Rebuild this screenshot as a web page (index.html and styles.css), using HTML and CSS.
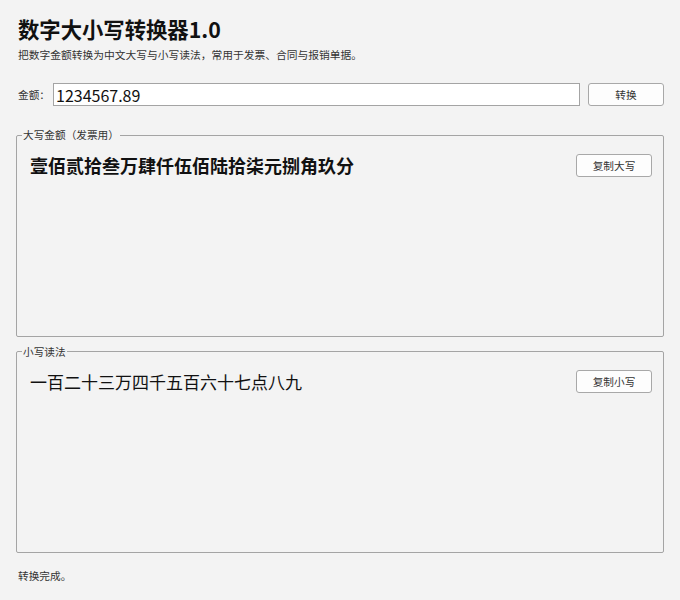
FILE: index.html
```html
<!DOCTYPE html>
<html lang="zh-CN">
<head>
<meta charset="utf-8">
<title>数字大小写转换器1.0</title>
<link rel="stylesheet" href="styles.css">
</head>
<body>
<div class="app">
  <h1 class="title">数字大小写转换器1.0</h1>
  <p class="subtitle cjk">把数字金额转换为中文大写与小写读法，常用于发票、合同与报销单据。</p>
  <div class="input-row">
    <label class="label cjk" for="amount">金额：</label>
    <input id="amount" class="amount" type="text" value="1234567.89">
    <button class="btn btn-convert">转换</button>
  </div>
  <fieldset class="group">
    <legend class="legend cjk">大写金额（发票用）</legend>
    <div class="result-row">
      <span class="result result-bold">壹佰贰拾叁万肆仟伍佰陆拾柒元捌角玖分</span>
      <button class="btn">复制大写</button>
    </div>
  </fieldset>
  <fieldset class="group">
    <legend class="legend cjk">小写读法</legend>
    <div class="result-row">
      <span class="result result-plain">一百二十三万四千五百六十七点八九</span>
      <button class="btn">复制小写</button>
    </div>
  </fieldset>
  <div class="status cjk">转换完成。</div>
</div>
</body>
</html>
```

FILE: styles.css
```css
* { box-sizing: border-box; }
html, body {
  margin: 0;
  padding: 0;
  background: #f3f3f3;
}
body {
  font-family: "Noto Sans CJK SC", "Noto Sans", sans-serif;
  color: #222;
}
.cjk {
  font-family: "Noto Sans CJK KR", "Noto Sans CJK SC", sans-serif;
}
.app {
  height: 600px;
  display: flex;
  flex-direction: column;
  padding: 15px 16px 17px 16px;
}
.title {
  margin: 0 0 0 2px;
  font-size: 21.33px;
  line-height: 28px;
  font-weight: bold;
  color: #111;
}
.subtitle {
  margin: 5px 0 0 2px;
  font-size: 10.75px;
  line-height: 14px;
  color: #333;
}
.input-row {
  margin-top: 21px;
  display: flex;
  align-items: center;
  height: 23px;
}
.label {
  margin-left: 2px;
  font-size: 10.67px;
  line-height: 14px;
  color: #333;
  width: 35px;
}
.amount {
  flex: 1;
  height: 23px;
  margin: 0;
  padding: 0 2px;
  border: 1px solid #a4a4a4;
  border-radius: 0;
  background: #fff;
  font-family: "Noto Sans CJK SC", "Noto Sans", sans-serif;
  font-size: 16px;
  color: #111;
  outline: none;
}
.btn {
  width: 76px;
  height: 23px;
  margin: 0;
  padding: 0;
  border: 1px solid #a8a8a8;
  border-radius: 3px;
  background: #fdfdfd;
  font-family: "Noto Sans CJK SC", "Noto Sans", sans-serif;
  font-size: 10.67px;
  color: #333;
}
.btn-convert {
  margin-left: 8px;
}
.group {
  flex: 1;
  min-height: 0;
  margin: 22px 0 0 0;
  padding: 11px 11px 0 5px;
  border: 1px solid #a4a4a4;
  border-radius: 2px;
}
.group + .group {
  margin-top: 8px;
}
.legend {
  padding: 0 1px;
  font-size: 10.67px;
  line-height: 14px;
  color: #333;
}
.result-row {
  display: flex;
  justify-content: space-between;
  align-items: center;
  padding-left: 8px;
}
.result {
  color: #111;
  line-height: 24px;
}
.result-bold {
  font-size: 18px;
  font-weight: bold;
}
.result-plain {
  font-size: 17px;
}
.status {
  margin: 16px 0 0 2px;
  font-size: 10.67px;
  line-height: 14px;
  color: #333;
}
```
